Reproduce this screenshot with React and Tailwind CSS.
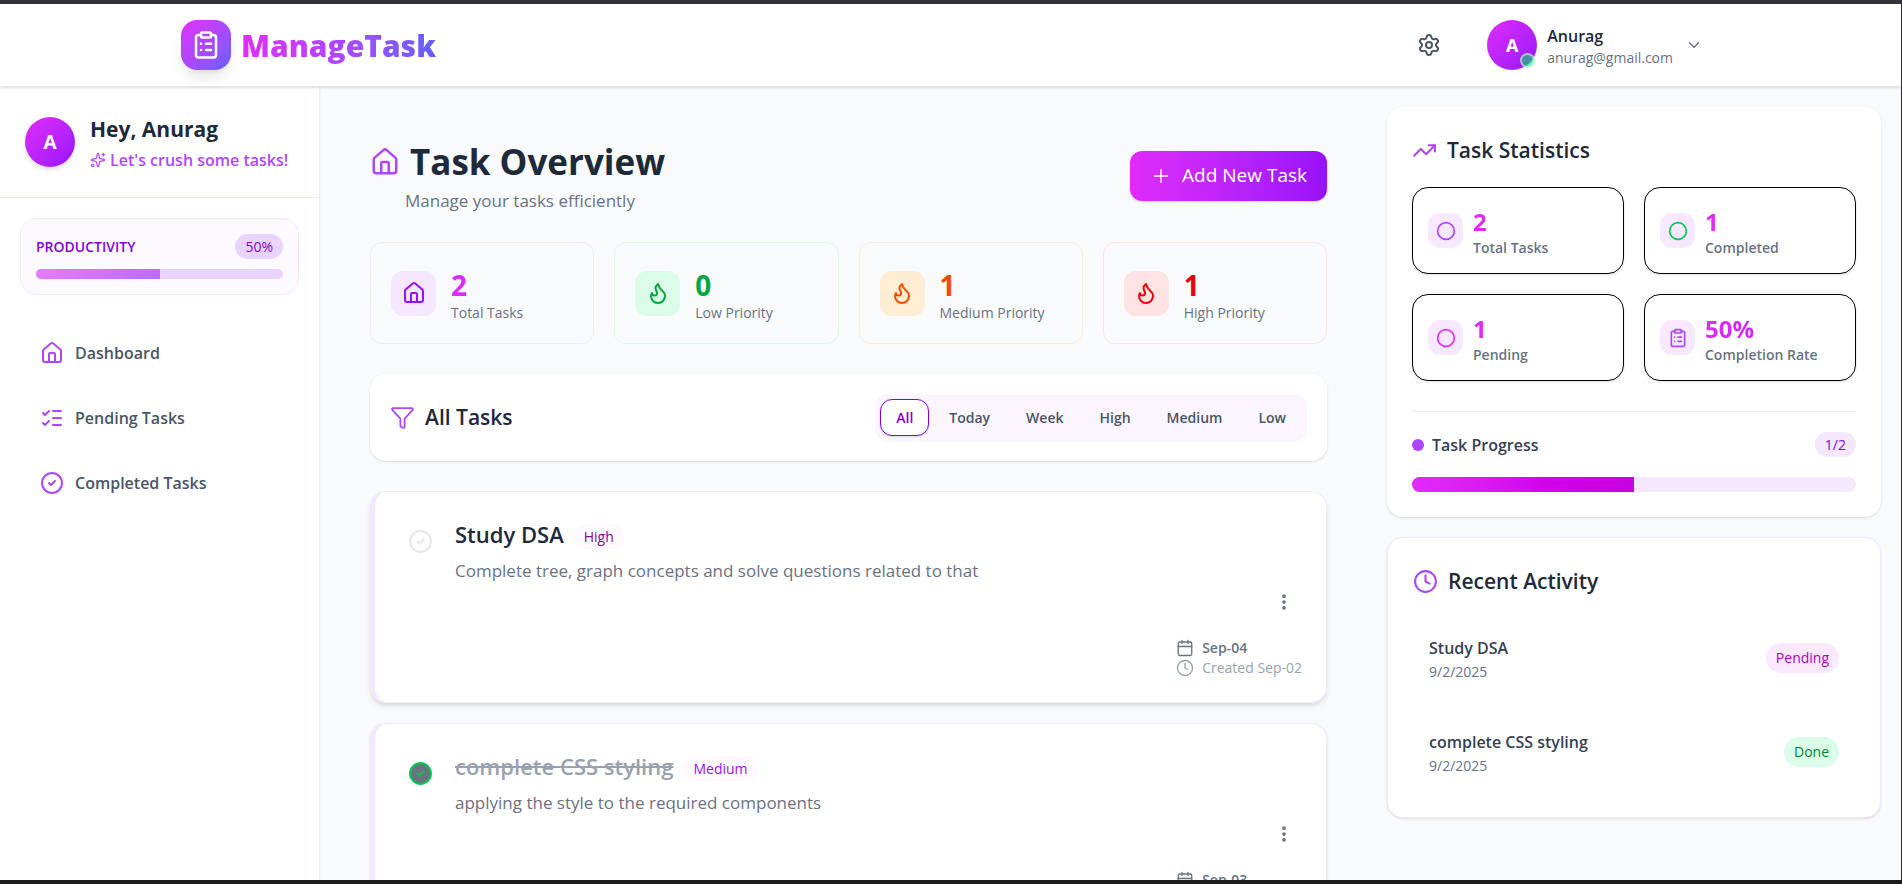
import React, { useState } from "react";
import {
  ClipboardList, Settings, ChevronDown, Sparkles, House, ListChecks, CircleCheck,
  Plus, Flame, Funnel, EllipsisVertical, Calendar, Clock, TrendingUp, Circle,
} from "lucide-react";

const navItems = [
  { label: "Dashboard", icon: House },
  { label: "Pending Tasks", icon: ListChecks },
  { label: "Completed Tasks", icon: CircleCheck },
];

const overview = [
  { label: "Total Tasks", value: 2, icon: House, border: "border-purple-100", box: "bg-purple-100 text-purple-600", num: "bg-linear-to-r from-fuchsia-500 to-purple-600 bg-size-[120px_100%] bg-clip-text text-transparent" },
  { label: "Low Priority", value: 0, icon: Flame, border: "border-green-100", box: "bg-green-100 text-green-600", num: "text-green-600" },
  { label: "Medium Priority", value: 1, icon: Flame, border: "border-orange-100", box: "bg-orange-100 text-orange-600", num: "text-orange-600" },
  { label: "High Priority", value: 1, icon: Flame, border: "border-red-100", box: "bg-red-100 text-red-600", num: "text-red-600" },
];

const filters = ["All", "Today", "Week", "High", "Medium", "Low"];

const tasks = [
  { title: "Study DSA", priority: "High", tone: "text-fuchsia-800", text: "Complete tree, graph concepts and solve questions related to that", due: "Sep-04", done: false, shadow: "shadow-md" },
  { title: "complete CSS styling", priority: "Medium", tone: "text-purple-600", text: "applying the style to the required components", due: "Sep-03", done: true, shadow: "shadow-sm" },
];

const stats = [
  { label: "Total Tasks", value: "2", icon: Circle, tone: "text-purple-500" },
  { label: "Completed", value: "1", icon: Circle, tone: "text-green-500" },
  { label: "Pending", value: "1", icon: Circle, tone: "text-fuchsia-500" },
  { label: "Completion Rate", value: "50%", icon: ClipboardList, tone: "text-purple-500" },
];

const activity = [
  { title: "Study DSA", date: "9/2/2025", status: "Pending", tone: "bg-fuchsia-100 text-fuchsia-700" },
  { title: "complete CSS styling", date: "9/2/2025", status: "Done", tone: "bg-green-100 text-green-700" },
];

function Header() {
  return (
    <header className="relative z-10 flex h-[83px] shrink-0 items-center justify-between border-b border-gray-200 bg-white pr-[198px] pl-[181px] shadow-sm">
      <a href="#home" className="flex items-center gap-[10px]">
        <span className="flex size-[50px] items-center justify-center rounded-2xl bg-linear-to-br from-fuchsia-500 via-purple-500 to-indigo-500 text-white shadow-lg">
          <ClipboardList size={30} />
        </span>
        <span className="bg-linear-to-r from-fuchsia-500 via-purple-500 to-indigo-500 bg-clip-text pt-0.5 text-[30px] leading-10 font-extrabold text-transparent">
          ManageTask
        </span>
      </a>
      <div className="flex items-center gap-[46px]">
        <button type="button" aria-label="Settings" className="text-gray-600">
          <Settings size={24} />
        </button>
        <button type="button" className="flex items-center text-left">
          <span className="relative flex size-[50px] items-center justify-center rounded-full bg-linear-to-br from-fuchsia-500 to-purple-600 text-[18px] font-bold text-white">
            A
            <span className="absolute right-0.5 bottom-0.5 size-[15px] rounded-full border-2 border-white/50 bg-green-400/60" />
          </span>
          <span className="ml-[10px] flex flex-col pt-1">
            <span className="text-[16px] leading-[22px] font-semibold text-gray-800">Anurag</span>
            <span className="text-[14px] leading-[22px] text-gray-500">anurag@gmail.com</span>
          </span>
          <ChevronDown size={18} className="ml-3 text-gray-500" />
        </button>
      </div>
    </header>
  );
}

function Sidebar() {
  return (
    <aside className="flex w-80 shrink-0 flex-col border-r border-purple-100 bg-white shadow-xs">
      <div className="flex h-[111px] items-center gap-[15px] border-b border-purple-100 px-[25px]">
        <div className="flex size-[50px] shrink-0 items-center justify-center rounded-full bg-linear-to-br from-fuchsia-500 to-purple-600 text-[19px] font-bold text-white shadow-md">
          A
        </div>
        <div className="pt-1 whitespace-nowrap">
          <h2 className="text-[21px] leading-8 font-bold text-gray-800">Hey, Anurag</h2>
          <p className="flex items-center gap-1 text-[16px] leading-[30px] font-semibold text-purple-500">
            <Sparkles size={16} strokeWidth={1.75} /> Let's crush some tasks!
          </p>
        </div>
      </div>
      <div className="p-5">
        <div className="flex flex-col gap-[10px] rounded-2xl border border-purple-100 bg-[#fdfaff] p-[15px]">
          <div className="flex items-center justify-between text-purple-700">
            <span className="text-[14px] font-semibold">PRODUCTIVITY</span>
            <span className="rounded-full bg-purple-200 px-[10px] text-[14px] leading-[25px]">50%</span>
          </div>
          <div className="h-[10px] overflow-hidden rounded-full bg-purple-200">
            <div className="h-full w-1/2 bg-linear-to-r from-[#e57bfd] to-[#bd6bfd]" />
          </div>
        </div>
      </div>
      <nav className="flex flex-col gap-[15px] px-[40px] pt-[13px]">
        {navItems.map(({ label, icon: Icon }) => (
          <a key={label} href={"#" + label.split(" ")[0].toLowerCase()} className="flex h-[50px] items-center gap-[11px] text-[16px] font-semibold text-gray-600">
            <Icon size={24} className="text-purple-500" />
            {label}
          </a>
        ))}
      </nav>
    </aside>
  );
}

function TaskCard({ task }) {
  const [done, setDone] = useState(task.done);
  return (
    <article className={"flex h-[212px] shrink-0 rounded-2xl border border-l-[5px] border-purple-100 bg-white pt-[27px] pr-5 pl-[33px] " + task.shadow}>
      <button
        type="button"
        aria-pressed={done}
        aria-label={"Mark " + task.title + " as done"}
        onClick={() => setDone(!done)}
        className={"mt-[10px] h-[25px] shrink-0 " + (done ? "text-green-500" : "text-gray-200")}
      >
        <CircleCheck size={25} fill={done ? "#6a7282" : "none"} />
      </button>
      <div className="ml-[22px] flex min-w-0 flex-1 flex-col">
        <div className="flex items-center gap-[10px]">
          <h3 className={"text-[22px] leading-[30px] font-semibold " + (done ? "text-gray-400 line-through" : "text-gray-800")}>{task.title}</h3>
          <span className={"mt-1 rounded-full bg-[#fdf9ff] px-[10px] text-[14px] leading-[25px] " + task.tone}>{task.priority}</span>
        </div>
        <p className="mt-[7px] text-[17px] leading-[30px] text-gray-500">{task.text}</p>
        <button type="button" aria-label="Task options" className="mt-[6px] mr-3 self-end text-gray-500">
          <EllipsisVertical size={20} strokeWidth={2.5} />
        </button>
        <div className="mt-[26px] self-end pr-1 text-[14px] leading-5">
          <p className="flex items-center gap-2 font-semibold text-gray-500"><Calendar size={18} strokeWidth={1.75} />{task.due}</p>
          <p className="flex items-center gap-2 text-gray-400"><Clock size={18} strokeWidth={1.75} />Created Sep-02</p>
        </div>
      </div>
    </article>
  );
}

function Main() {
  const [active, setActive] = useState("All");
  return (
    <main className="flex min-w-0 flex-1 flex-col px-[50px] pt-[50px]">
      <div className="flex items-center justify-between">
        <div>
          <h1 className="flex items-center gap-[10px] text-[35px] leading-[50px] font-bold text-gray-800">
            <House size={30} className="text-purple-500" />Task Overview
          </h1>
          <p className="pl-[35px] text-[17px] leading-[27px] text-gray-500">Manage your tasks efficiently</p>
        </div>
        <button type="button" className="flex h-[50px] items-center gap-[10px] rounded-xl bg-linear-to-r from-fuchsia-500 to-purple-600 px-5 text-[19px] text-white shadow-sm">
          <Plus size={22} strokeWidth={1.5} />Add New Task
        </button>
      </div>
      <div className="mt-7 grid grid-cols-4 gap-5">
        {overview.map(({ label, value, icon: Icon, border, box, num }) => (
          <div key={label} className={"flex h-[102px] items-center gap-[15px] rounded-xl border px-5 " + border}>
            <span className={"flex size-[45px] shrink-0 items-center justify-center rounded-xl " + box}><Icon size={24} /></span>
            <div className="pt-2">
              <p className={"text-[28px] leading-8 font-bold " + num}>{value}</p>
              <p className="text-[14px] leading-6 text-gray-500">{label}</p>
            </div>
          </div>
        ))}
      </div>
      <div className="mt-[30px] flex h-[87px] shrink-0 items-center justify-between rounded-2xl bg-white px-5 shadow-sm">
        <h2 className="flex items-center gap-[10px] text-[21px] font-semibold text-gray-800">
          <Funnel size={25} strokeWidth={1.75} className="text-purple-500" />All Tasks
        </h2>
        <div className="flex gap-1 rounded-xl bg-purple-50 p-[5px]">
          {filters.map((f) => (
            <button
              key={f}
              type="button"
              aria-pressed={f === active}
              onClick={() => setActive(f)}
              className={"h-[37px] rounded-xl border px-[15px] text-[14px] font-semibold " + (f === active ? "border-purple-700 bg-white text-purple-700 shadow-sm" : "border-transparent text-gray-600")}
            >
              {f}
            </button>
          ))}
        </div>
      </div>
      <div className="mt-[30px] flex flex-col gap-5">
        {tasks.map((t) => <TaskCard key={t.title} task={t} />)}
      </div>
    </main>
  );
}

function RightPanel() {
  return (
    <aside className="flex w-[524px] shrink-0 flex-col gap-5 py-5 pr-5 pl-[10px]">
      <section className="rounded-2xl bg-white p-[25px] shadow-sm">
        <h2 className="flex items-center gap-[10px] text-[21px] leading-9 font-semibold text-gray-800">
          <TrendingUp size={25} className="text-purple-500" />Task Statistics
        </h2>
        <div className="mt-[19px] grid grid-cols-2 gap-5">
          {stats.map(({ label, value, icon: Icon, tone }) => (
            <div key={label} className="flex h-[87px] items-center gap-[10px] rounded-2xl border border-black px-[15px] shadow-sm">
              <span className={"flex size-[35px] shrink-0 items-center justify-center rounded-xl bg-linear-to-br from-fuchsia-100 to-purple-100 " + tone}><Icon size={20} /></span>
              <div className="pt-[6px]">
                <p className="bg-linear-to-r from-fuchsia-500 to-purple-600 bg-size-[180px_100%] bg-clip-text text-[24px] leading-7 font-bold text-transparent">{value}</p>
                <p className="text-[14px] leading-6 font-semibold text-gray-500">{label}</p>
              </div>
            </div>
          ))}
        </div>
        <div className="mt-[30px] border-t border-purple-100 pt-5">
          <div className="flex items-center justify-between">
            <p className="flex items-center gap-2 text-[16px] font-semibold text-gray-700">
              <span className="size-3 rounded-full bg-purple-500" />Task Progress
            </p>
            <span className="rounded-full bg-purple-100 px-[10px] text-[14px] leading-[25px] text-purple-700">1/2</span>
          </div>
          <div className="mt-5 h-[15px] overflow-hidden rounded-full bg-purple-100">
            <div className="h-full w-1/2 bg-linear-to-r from-fuchsia-500 to-fuchsia-600" />
          </div>
        </div>
      </section>
      <section className="rounded-2xl border border-purple-100 bg-white px-[25px] pt-[25px] pb-[18px] shadow-sm">
        <h2 className="flex items-center gap-[10px] text-[21px] leading-9 font-semibold text-gray-800">
          <Clock size={25} className="text-purple-500" />Recent Activity
        </h2>
        <ul className="mt-3 flex flex-col">
          {activity.map((a) => (
            <li key={a.title} className="flex h-[94px] items-center justify-between px-4">
              <div className="pt-[3px]">
                <p className="text-[16px] leading-6 font-semibold text-gray-700">{a.title}</p>
                <p className="text-[14px] leading-6 text-gray-500">{a.date}</p>
              </div>
              <span className={"rounded-full px-[10px] text-[14px] leading-[30px] " + a.tone}>{a.status}</span>
            </li>
          ))}
        </ul>
      </section>
    </aside>
  );
}

export default function App() {
  return (
    <div className="h-screen border-t-4 border-r border-b-4 border-t-[#35343a] border-r-[#2b2a30] border-b-[#1c1b1e] font-['Open_Sans','Noto_Sans',sans-serif]">
      <div className="flex h-full flex-col overflow-hidden bg-[#f9fafc]">
        <Header />
        <div className="flex min-h-0 flex-1">
          <Sidebar />
          <Main />
          <RightPanel />
        </div>
      </div>
    </div>
  );
}
